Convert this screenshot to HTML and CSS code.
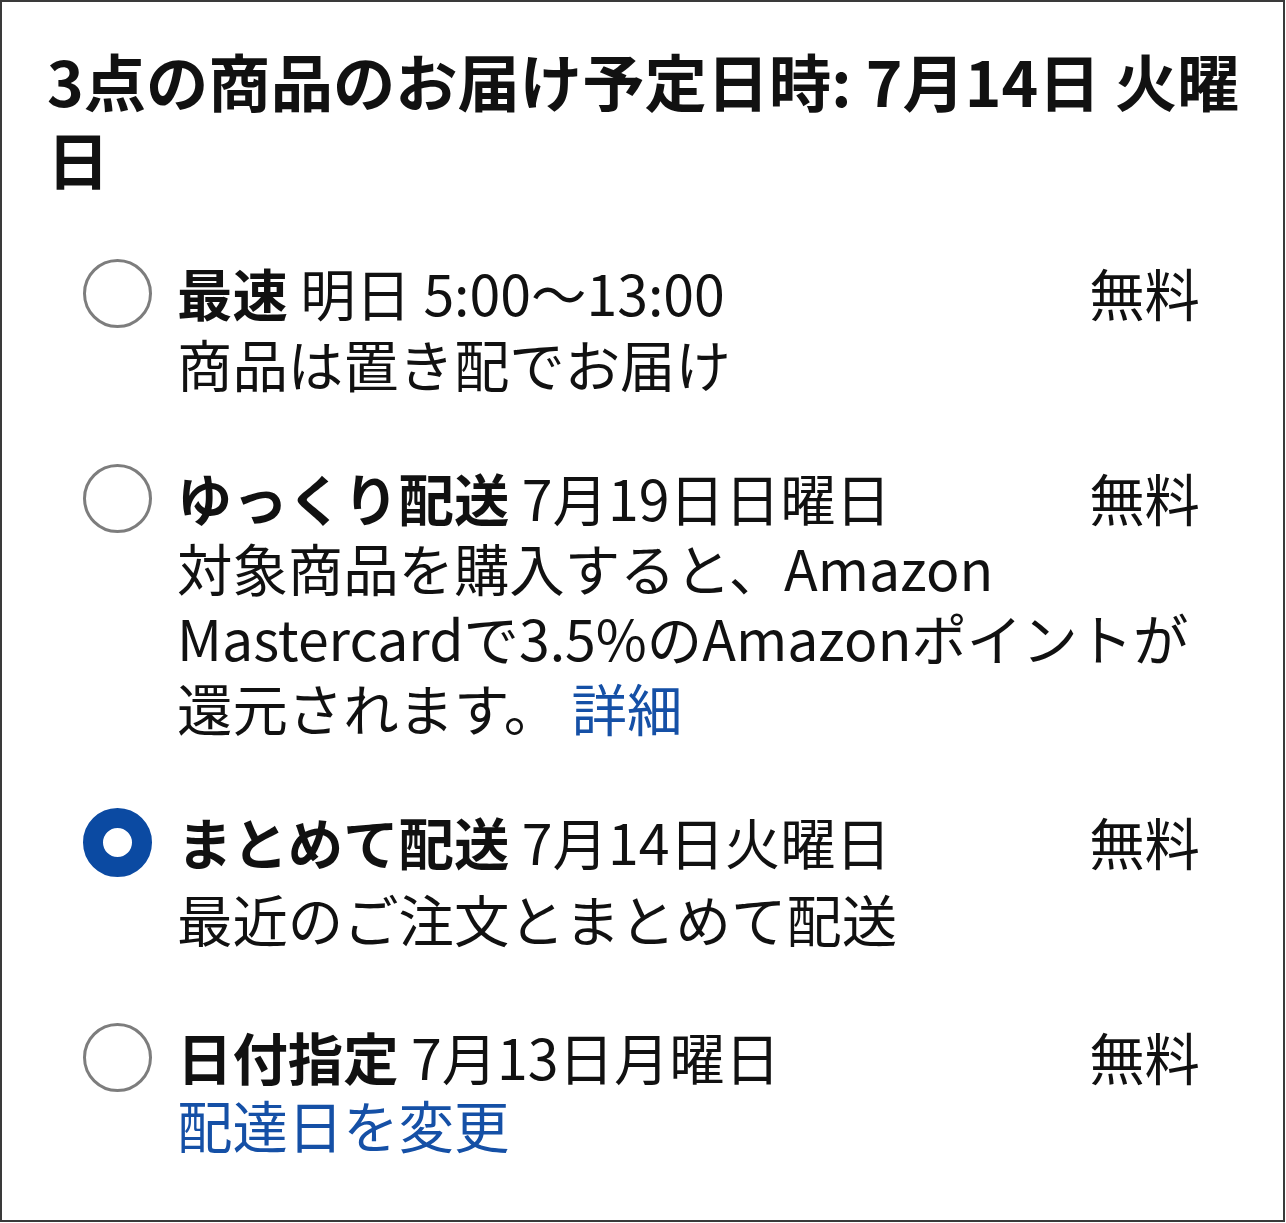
FILE: index.html
```html
<!DOCTYPE html>
<html lang="ja">
<head>
<meta charset="utf-8">
<title>お届け予定日時</title>
<link rel="stylesheet" href="styles.css">
</head>
<body>
<div class="frame">
  <h1 class="title">3点の商品のお届け予定日時: 7月14日 火曜日</h1>
  <ul class="options">
    <li class="option">
      <span class="radio"></span>
      <div class="body">
        <div class="head"><span class="label"><b>最速</b> 明日 5:00〜13:00</span><span class="price">無料</span></div>
        <div class="desc desc-first">商品は置き配でお届け</div>
      </div>
    </li>
    <li class="option">
      <span class="radio"></span>
      <div class="body">
        <div class="head"><span class="label"><b>ゆっくり配送</b> 7月19日日曜日</span><span class="price">無料</span></div>
        <div class="desc nowrap">対象商品を購入すると、Amazon<br>Mastercardで3.5%のAmazonポイントが<br>還元されます。 <a class="link" href="#">詳細</a></div>
      </div>
    </li>
    <li class="option">
      <span class="radio radio-checked"></span>
      <div class="body">
        <div class="head"><span class="label"><b>まとめて配送</b> 7月14日火曜日</span><span class="price">無料</span></div>
        <div class="desc desc-spaced">最近のご注文とまとめて配送</div>
      </div>
    </li>
    <li class="option">
      <span class="radio"></span>
      <div class="body">
        <div class="head"><span class="label"><b>日付指定</b> 7月13日月曜日</span><span class="price">無料</span></div>
        <div class="desc desc-tight"><a class="link" href="#">配達日を変更</a></div>
      </div>
    </li>
  </ul>
</div>
</body>
</html>
```
FILE: styles.css
```css
html, body {
  margin: 0;
  padding: 0;
  background: #ffffff;
}

body {
  font-family: "Noto Sans CJK JP", "Noto Sans", sans-serif;
  color: #111111;
}

.frame {
  box-sizing: border-box;
  width: 1285px;
  height: 1222px;
  border: 2px solid #3a3a3a;
  background: #ffffff;
  padding: 40px 30px 0 45px;
}

.title {
  margin: 0;
  font-size: 62.3px;
  line-height: 77.5px;
  font-weight: 700;
  color: #111111;
}

.options {
  list-style: none;
  margin: 60px 0 0 0;
  padding: 0 53px 0 36px;
  display: flex;
  flex-direction: column;
  gap: 64px;
}

.option {
  display: flex;
  align-items: flex-start;
  gap: 25px;
}

.radio {
  flex: 0 0 auto;
  box-sizing: border-box;
  width: 69px;
  height: 69px;
  margin-top: 2px;
  border-radius: 50%;
  border: 3px solid #7d7d7d;
  background: #ffffff;
}

.radio-checked {
  border: 20px solid #0b4aa2;
}

.body {
  flex: 1 1 auto;
  font-size: 55.4px;
  line-height: 70px;
}

.head {
  display: flex;
  justify-content: space-between;
  align-items: baseline;
}

.label b {
  font-weight: 700;
}

.price {
  font-weight: 400;
}

.desc-first {
  margin-top: 1px;
}

.desc-spaced {
  margin-top: 7px;
  margin-bottom: 4px;
}

.desc-tight {
  margin-top: -2px;
}

.nowrap {
  white-space: nowrap;
}

.link {
  color: #1550a6;
  text-decoration: none;
}
```
